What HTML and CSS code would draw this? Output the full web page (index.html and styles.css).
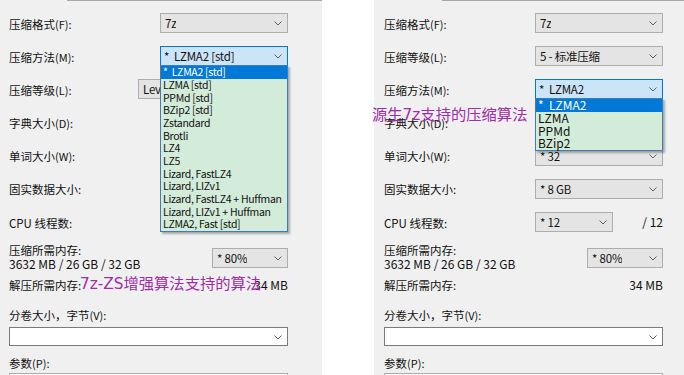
FILE: index.html
```html
<!DOCTYPE html>
<html lang="zh-CN">
<head>
<meta charset="utf-8">
<title>7-Zip 压缩算法对比</title>
<link rel="stylesheet" href="styles.css">
</head>
<body>
<div class="stage">
  <section class="panel panel-left">
    <div class="topline"></div>
    <div class="rows">
      <div class="row">
        <span class="label">压缩格式<span class="key">(F):</span></span>
        <div class="combo"><span class="val">7z</span><svg class="chev" width="8" height="5" viewBox="0 0 8 5"><path d="M0.5 0.5 L4 4 L7.5 0.5" fill="none" stroke="#606060" stroke-width="1"/></svg></div>
      </div>
      <div class="row">
        <span class="label">压缩方法<span class="key">(M):</span></span>
        <div class="combo focus"><span class="val">*&nbsp; LZMA2 [std]</span><svg class="chev" width="8" height="5" viewBox="0 0 8 5"><path d="M0.5 0.5 L4 4 L7.5 0.5" fill="none" stroke="#606060" stroke-width="1"/></svg>
          <ul class="list">
            <li class="item sel">*&nbsp; LZMA2 [std]</li>
            <li class="item">LZMA [std]</li>
            <li class="item">PPMd [std]</li>
            <li class="item">BZip2 [std]</li>
            <li class="item">Zstandard</li>
            <li class="item">Brotli</li>
            <li class="item">LZ4</li>
            <li class="item">LZ5</li>
            <li class="item">Lizard, FastLZ4</li>
            <li class="item">Lizard, LIZv1</li>
            <li class="item">Lizard, FastLZ4 + Huffman</li>
            <li class="item">Lizard, LIZv1 + Huffman</li>
            <li class="item">LZMA2, Fast [std]</li>
          </ul>
        </div>
      </div>
      <div class="row">
        <span class="label">压缩等级<span class="key">(L):</span></span>
        <div class="combo wide"><span class="val">Level 5 - 标准压缩</span><svg class="chev" width="8" height="5" viewBox="0 0 8 5"><path d="M0.5 0.5 L4 4 L7.5 0.5" fill="none" stroke="#606060" stroke-width="1"/></svg></div>
      </div>
      <div class="row">
        <span class="label">字典大小<span class="key">(D):</span></span>
        <div class="combo"><span class="val">* 16 MB</span><svg class="chev" width="8" height="5" viewBox="0 0 8 5"><path d="M0.5 0.5 L4 4 L7.5 0.5" fill="none" stroke="#606060" stroke-width="1"/></svg></div>
      </div>
      <div class="row">
        <span class="label">单词大小<span class="key">(W):</span></span>
        <div class="combo"><span class="val">* 32</span><svg class="chev" width="8" height="5" viewBox="0 0 8 5"><path d="M0.5 0.5 L4 4 L7.5 0.5" fill="none" stroke="#606060" stroke-width="1"/></svg></div>
      </div>
      <div class="row">
        <span class="label">固实数据大小:</span>
        <div class="combo"><span class="val">* 8 GB</span><svg class="chev" width="8" height="5" viewBox="0 0 8 5"><path d="M0.5 0.5 L4 4 L7.5 0.5" fill="none" stroke="#606060" stroke-width="1"/></svg></div>
      </div>
      <div class="row">
        <span class="label">CPU 线程数:</span>
        <div class="combo small"><span class="val">* 12</span><svg class="chev" width="8" height="5" viewBox="0 0 8 5"><path d="M0.5 0.5 L4 4 L7.5 0.5" fill="none" stroke="#606060" stroke-width="1"/></svg></div>
        <span class="ratio">/ 12</span>
      </div>
    </div>
    <div class="lower">
      <div class="mem">
        <div class="mem-text">
          <div class="line">压缩所需内存:</div>
          <div class="line">3632 MB / 26 GB / 32 GB</div>
        </div>
        <div class="combo mem-combo"><span class="val">* 80%</span><svg class="chev" width="8" height="5" viewBox="0 0 8 5"><path d="M0.5 0.5 L4 4 L7.5 0.5" fill="none" stroke="#606060" stroke-width="1"/></svg></div>
      </div>
      <div class="decomp"><span>解压所需内存:</span><span>34 MB</span></div>
      <div class="line vol">分卷大小，字节<span class="key">(V):</span></div>
      <div class="combo white"><svg class="chev" width="8" height="5" viewBox="0 0 8 5"><path d="M0.5 0.5 L4 4 L7.5 0.5" fill="none" stroke="#606060" stroke-width="1"/></svg></div>
      <div class="line params">参数<span class="key">(P):</span></div>
      <div class="field"></div>
    </div>
    <div class="note note-left">7z-ZS增强算法支持的算法</div>
  </section>

  <div class="gap"></div>

  <section class="panel panel-right">
    <div class="topline"></div>
    <div class="rows">
      <div class="row">
        <span class="label">压缩格式<span class="key">(F):</span></span>
        <div class="combo"><span class="val">7z</span><svg class="chev" width="8" height="5" viewBox="0 0 8 5"><path d="M0.5 0.5 L4 4 L7.5 0.5" fill="none" stroke="#606060" stroke-width="1"/></svg></div>
      </div>
      <div class="row">
        <span class="label">压缩等级<span class="key">(L):</span></span>
        <div class="combo"><span class="val">5 - 标准压缩</span><svg class="chev" width="8" height="5" viewBox="0 0 8 5"><path d="M0.5 0.5 L4 4 L7.5 0.5" fill="none" stroke="#606060" stroke-width="1"/></svg></div>
      </div>
      <div class="row">
        <span class="label">压缩方法<span class="key">(M):</span></span>
        <div class="combo focus"><span class="val">*&nbsp; LZMA2</span><svg class="chev" width="8" height="5" viewBox="0 0 8 5"><path d="M0.5 0.5 L4 4 L7.5 0.5" fill="none" stroke="#606060" stroke-width="1"/></svg>
          <ul class="list big">
            <li class="item sel">*&nbsp; LZMA2</li>
            <li class="item">LZMA</li>
            <li class="item">PPMd</li>
            <li class="item">BZip2</li>
          </ul>
        </div>
      </div>
      <div class="row">
        <span class="label">字典大小<span class="key">(D):</span></span>
        <div class="combo"><span class="val">* 16 MB</span><svg class="chev" width="8" height="5" viewBox="0 0 8 5"><path d="M0.5 0.5 L4 4 L7.5 0.5" fill="none" stroke="#606060" stroke-width="1"/></svg></div>
      </div>
      <div class="row">
        <span class="label">单词大小<span class="key">(W):</span></span>
        <div class="combo"><span class="val">* 32</span><svg class="chev" width="8" height="5" viewBox="0 0 8 5"><path d="M0.5 0.5 L4 4 L7.5 0.5" fill="none" stroke="#606060" stroke-width="1"/></svg></div>
      </div>
      <div class="row">
        <span class="label">固实数据大小:</span>
        <div class="combo"><span class="val">* 8 GB</span><svg class="chev" width="8" height="5" viewBox="0 0 8 5"><path d="M0.5 0.5 L4 4 L7.5 0.5" fill="none" stroke="#606060" stroke-width="1"/></svg></div>
      </div>
      <div class="row">
        <span class="label">CPU 线程数:</span>
        <div class="combo small"><span class="val">* 12</span><svg class="chev" width="8" height="5" viewBox="0 0 8 5"><path d="M0.5 0.5 L4 4 L7.5 0.5" fill="none" stroke="#606060" stroke-width="1"/></svg></div>
        <span class="ratio">/ 12</span>
      </div>
    </div>
    <div class="lower">
      <div class="mem">
        <div class="mem-text">
          <div class="line">压缩所需内存:</div>
          <div class="line">3632 MB / 26 GB / 32 GB</div>
        </div>
        <div class="combo mem-combo"><span class="val">* 80%</span><svg class="chev" width="8" height="5" viewBox="0 0 8 5"><path d="M0.5 0.5 L4 4 L7.5 0.5" fill="none" stroke="#606060" stroke-width="1"/></svg></div>
      </div>
      <div class="decomp"><span>解压所需内存:</span><span>34 MB</span></div>
      <div class="line vol">分卷大小，字节<span class="key">(V):</span></div>
      <div class="combo white"><svg class="chev" width="8" height="5" viewBox="0 0 8 5"><path d="M0.5 0.5 L4 4 L7.5 0.5" fill="none" stroke="#606060" stroke-width="1"/></svg></div>
      <div class="line params">参数<span class="key">(P):</span></div>
      <div class="field"></div>
    </div>
    <div class="note note-right">源生7z支持的压缩算法</div>
  </section>
</div>
</body>
</html>
```
FILE: styles.css
```css
* { box-sizing: border-box; }
html, body { margin: 0; padding: 0; }
body {
  width: 684px;
  height: 375px;
  overflow: hidden;
  background: #ffffff;
  font-family: "Noto Sans CJK SC", "Liberation Sans", sans-serif;
  font-size: 11.5px;
  color: #111111;
}
.stage { display: flex; height: 375px; overflow: hidden; }
.panel {
  position: relative;
  flex: 0 0 323px;
  background: #f0f0f0;
  padding: 0 34px 0 10px;
}
.panel-left { margin-left: -1px; }
.gap { flex: 0 0 52px; }

.topline {
  height: 1px;
  margin-left: 58px;
  margin-right: -34px;
  background: #a8a8a8;
}

.rows {
  display: flex;
  flex-direction: column;
  gap: 13.2px;
  padding-top: 12px;
}
.row {
  display: flex;
  align-items: center;
  height: 20px;
}
.label {
  flex: 0 0 151px;
  white-space: nowrap;
  line-height: 14px;
  padding-top: 1px;
}
.key { font-size: 11px; }

.combo {
  position: relative;
  flex: 0 0 128px;
  width: 128px;
  height: 20px;
  border: 1px solid #adadad;
  background: #e4e4e4;
  display: flex;
  align-items: center;
  padding-left: 4px;
  font-size: 11.5px;
  letter-spacing: -0.2px;
  line-height: 14px;
  white-space: nowrap;
}
.combo .val { overflow: hidden; }
.combo .chev { position: absolute; right: 5px; top: 7px; }
.combo.focus { background: #cce4f7; border-color: #0078d7; padding-left: 3px; }
.combo.wide { flex-basis: 150px; width: 150px; margin-left: -22px; }
.combo.small { flex-basis: 78px; width: 78px; }
.ratio { margin-left: auto; font-size: 12px; line-height: 14px; }

.list {
  position: absolute;
  top: 100%;
  left: -1px;
  width: 128px;
  margin: 0;
  padding: 0;
  list-style: none;
  background: #d3ecd9;
  border: 1px solid #3d7db3;
  box-shadow: 2px 2px 2px rgba(0, 0, 0, 0.3);
  z-index: 5;
  font-size: 10.5px;
  letter-spacing: -0.3px;
  color: #111111;
}
.list.big { font-size: 12px; letter-spacing: 0; }
.list .item {
  height: 12.7px;
  line-height: 12.7px;
  padding-left: 2px;
  white-space: nowrap;
}
.list .item.sel { background: #0078d7; color: #ffffff; }

.lower {
  display: flex;
  flex-direction: column;
  margin-top: 10.8px;
}
.line { line-height: 14px; white-space: nowrap; }
.mem { display: flex; align-items: flex-start; height: 28px; flex: 0 0 28px; }
.mem-text { flex: 1; }
.mem-text .line + .line { font-size: 12px; }
.combo.mem-combo { flex-basis: 76px; width: 76px; margin-top: 5px; }
.decomp {
  display: flex;
  justify-content: space-between;
  margin-top: 7px;
  line-height: 14px;
}
.decomp span + span { font-size: 12px; }
.vol { margin-top: 16px; }
.combo.white {
  flex: 0 0 19px;
  width: 100%;
  height: 19px;
  margin-top: 5px;
  background: #ffffff;
  border-color: #7a7a7a;
}
.params { margin-top: 10px; }
.field {
  flex: 0 0 20px;
  margin-top: 3px;
  height: 20px;
  border: 1px solid #adadad;
  background: #ffffff;
}

.note {
  position: absolute;
  z-index: 6;
  color: #a12ca8;
  font-family: "DejaVu Sans", "Noto Sans CJK SC", sans-serif;
  font-size: 15.3px;
  line-height: 18px;
  white-space: nowrap;
}
.note-left { left: 81px; top: 275px; }
.note-right { left: -2px; top: 106px; }
```
